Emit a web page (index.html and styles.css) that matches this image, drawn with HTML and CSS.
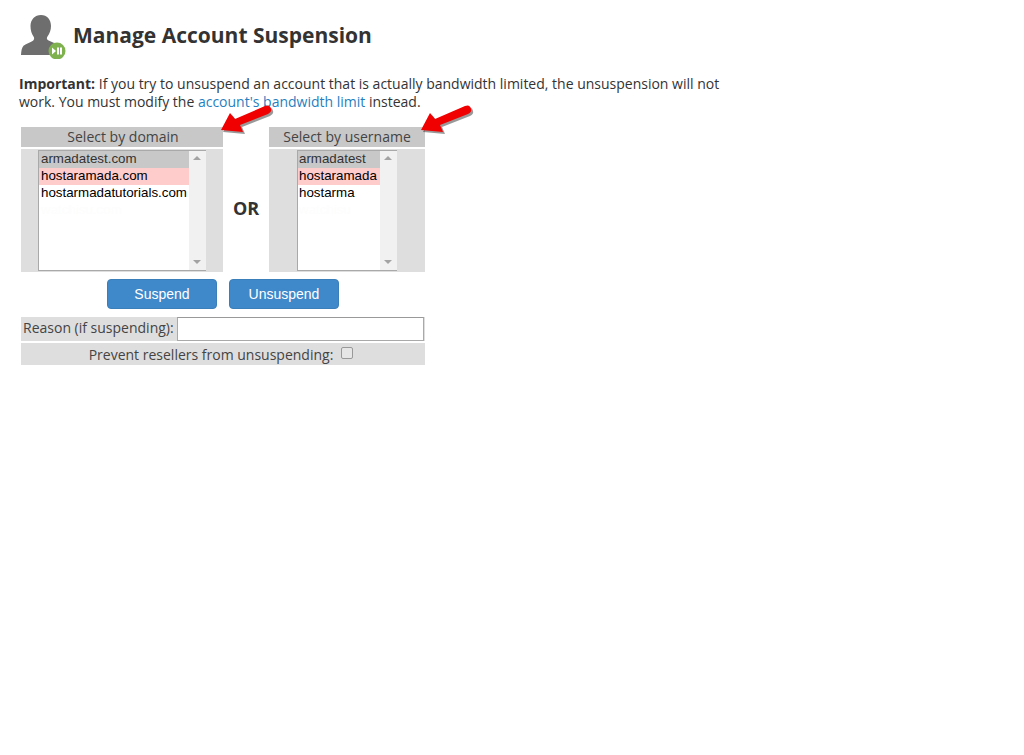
FILE: index.html
```html
<!DOCTYPE html>
<html lang="en">
<head>
<meta charset="utf-8">
<title>Manage Account Suspension</title>
<link rel="stylesheet" href="styles.css">
</head>
<body>
<header class="title-row">
  <svg class="page-icon" width="48" height="46" viewBox="0 0 48 46" aria-hidden="true">
    <path fill="#6e6e6e" d="M21 2c6 0 10 4.500 10 11 0 4-1.500 8-3.500 10.500-1 1.300-.8 3 .6 3.800 2 1.100 4.500 1.800 6.500 3 1 .6 1.600 1.400 1.900 2.400-4 .8-6.500 4.500-6.200 9.300H1c.2-4 .8-7.500 2.500-9.300 2-2 7-3.200 9.500-5 1.300-1 1.500-2.800.5-4.200C11.500 21 10.500 17 10.500 13 10.500 6.500 15 2 21 2z"/>
    <circle cx="37" cy="38" r="8.500" fill="#7fb24f"/>
    <path fill="#fff" d="M32 34.500l4 3.500-4 3.500z"/>
    <rect x="37" y="34.500" width="2" height="7" fill="#fff"/>
    <rect x="40" y="34.500" width="2" height="7" fill="#fff"/>
  </svg>
  <h1 class="title">Manage Account Suspension</h1>
</header>
<p class="notice"><strong>Important:</strong> If you try to unsuspend an account that is actually bandwidth limited, the unsuspension will not work. You must modify the <a href="#">account's bandwidth limit</a> instead.</p>
<form class="panel">
  <div class="picker">
    <div class="col-head col-domain">Select by domain</div>
    <div class="or-cell">OR</div>
    <div class="col-head col-user">Select by username</div>
    <div class="col-body col-domain">
      <div class="listbox listbox-domain" role="listbox">
        <div class="options">
          <div class="opt opt-grey">armadatest.com</div>
          <div class="opt opt-pink">hostaramada.com</div>
          <div class="opt">hostarmadatutorials.com</div>
          <div class="opt opt-ghost">watchisu.com</div>
        </div>
        <div class="scroll"><span class="up"></span><span class="down"></span></div>
      </div>
    </div>
    <div class="col-body col-user">
      <div class="listbox listbox-user" role="listbox">
        <div class="options">
          <div class="opt opt-grey">armadatest</div>
          <div class="opt opt-pink">hostaramada</div>
          <div class="opt">hostarma</div>
          <div class="opt opt-ghost">watchisu</div>
        </div>
        <div class="scroll"><span class="up"></span><span class="down"></span></div>
      </div>
    </div>
  </div>
  <div class="actions">
    <button type="button" class="btn">Suspend</button>
    <button type="button" class="btn">Unsuspend</button>
  </div>
  <div class="reason-row">
    <label for="reason">Reason (if suspending):</label>
    <input id="reason" class="reason-input" type="text">
  </div>
  <div class="prevent-row">
    <label class="prevent-label" for="prevent">Prevent resellers from unsuspending:</label>
    <input id="prevent" class="check" type="checkbox">
  </div>
  <svg class="arrow arrow-one" width="65" height="40" viewBox="0 0 65 40" aria-hidden="true">
    <path class="arrow-shadow" d="M8 32L17 15 22 21 52 8Q57 6 58 11 59 14 55 16L27 27 30 34Z"/>
    <path class="arrow-fill" d="M6 30L15 13 20 19 50 6Q55 4 56 9 57 12 53 14L25 25 28 32Z"/>
  </svg>
  <svg class="arrow arrow-two" width="65" height="40" viewBox="0 0 65 40" aria-hidden="true">
    <path class="arrow-shadow" d="M8 32L17 15 22 21 52 8Q57 6 58 11 59 14 55 16L27 27 30 34Z"/>
    <path class="arrow-fill" d="M6 30L15 13 20 19 50 6Q55 4 56 9 57 12 53 14L25 25 28 32Z"/>
  </svg>
</form>
</body>
</html>
```

FILE: styles.css
```css
* { box-sizing: border-box; }
html, body { background: #fff; }
body {
  margin: 0;
  padding: 12px 0 0 19px;
  font-family: "Open Sans", sans-serif;
  font-size: 14px;
  line-height: 18px;
  color: #333;
}
.title-row { display: flex; align-items: center; height: 48px; }
.page-icon { flex: none; margin-right: 5px; margin-left: 1px; }
.title {
  margin: 0;
  font-size: 21px;
  line-height: 24px;
  font-weight: 700;
  color: #333;
  position: relative;
  top: -1px;
}
.notice { margin: 15px 0 0; width: 710px; }
.notice a { color: #1f7fc0; text-decoration: none; }
.panel {
  position: relative;
  width: 404px;
  margin: 16px 0 0 2px;
}
.picker {
  display: grid;
  grid-template-columns: 202px 46px 156px;
  grid-template-rows: 20px 123px;
  row-gap: 2px;
}
.col-head {
  background: #c8c8c8;
  text-align: center;
  line-height: 20px;
  color: #444;
}
.col-head.col-domain { grid-column: 1; grid-row: 1; padding-left: 2px; }
.col-head.col-user { grid-column: 3; grid-row: 1; }
.or-cell {
  grid-column: 2;
  grid-row: 1 / span 2;
  display: flex;
  align-items: center;
  justify-content: center;
  font-size: 18px;
  font-weight: 700;
  color: #333;
  padding-top: 17px;
}
.col-body {
  background: #dedede;
  display: flex;
  padding-top: 1px;
}
.col-body.col-domain { grid-column: 1; grid-row: 2; padding-left: 17px; }
.col-body.col-user { grid-column: 3; grid-row: 2; padding-left: 28px; }
.listbox {
  display: flex;
  height: 121px;
  background: #fff;
  border: 1px solid #a9a9a9;
  border-right: 0;
  overflow: hidden;
}
.listbox-domain { width: 168px; }
.listbox-user { width: 100px; }
.options { flex: 1; min-width: 0; }
.opt {
  height: 17px;
  padding-left: 2px;
  font-family: "Liberation Sans", Arial, sans-serif;
  font-size: 13.333px;
  line-height: 16px;
  color: #000;
  white-space: nowrap;
  overflow: hidden;
}
.listbox-user .opt { padding-left: 1px; }
.opt-grey { background: #c8c8c8; color: #333; }
.opt-pink { background: #fcc; }
.opt-ghost { color: #fdfdfd; }
.scroll {
  position: relative;
  flex: none;
  width: 17px;
  background: #f1f1f1;
}
.up, .down {
  position: absolute;
  left: 4px;
  width: 0;
  height: 0;
  border-left: 4px solid transparent;
  border-right: 4px solid transparent;
}
.up { top: 5px; border-bottom: 4px solid #a3a3a3; }
.down { bottom: 6px; border-top: 4px solid #a3a3a3; }
.actions {
  display: flex;
  justify-content: center;
  gap: 12px;
  margin-top: 7px;
}
.btn {
  width: 110px;
  height: 30px;
  padding: 0;
  border: 1px solid #3a7fb9;
  border-radius: 4px;
  background: #3f88c9;
  color: #fff;
  font-family: "Liberation Sans", Arial, sans-serif;
  font-size: 14px;
}
.reason-row {
  display: flex;
  align-items: center;
  height: 24px;
  margin-top: 8px;
  padding: 0 0 2px 2px;
  background: #dedede;
  color: #444;
}
.reason-input {
  width: 247px;
  height: 24px;
  margin: 2px 0 0 3px;
  padding: 0 4px;
  border: 1px solid #a9a9a9;
  border-top-color: #999;
  background: #fff;
}
.prevent-row {
  display: flex;
  align-items: center;
  justify-content: center;
  gap: 8px;
  height: 22px;
  margin-top: 2px;
  padding-right: 4px;
  background: #dedede;
  color: #444;
}
.prevent-label { padding-top: 2px; }
.check {
  appearance: none;
  width: 12px;
  height: 12px;
  margin: 0 0 3px;
  flex: none;
  border: 1px solid #999;
  border-radius: 2px;
  background: #e6e6e6;
}
.arrow { position: absolute; top: -27px; }
.arrow-one { left: 194px; }
.arrow-two { left: 394px; }
.arrow-fill { fill: #f00000; }
.arrow-shadow { fill: #000; opacity: .4; }
```
